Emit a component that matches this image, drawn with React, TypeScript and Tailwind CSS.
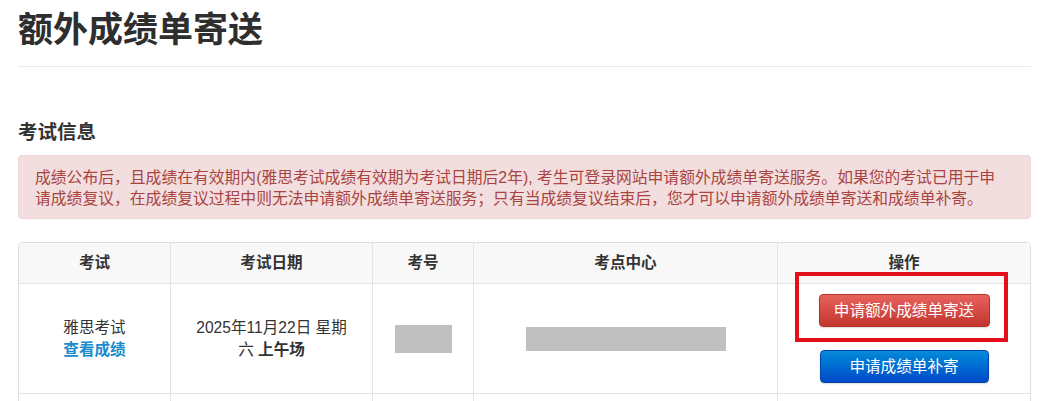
import React from "react";

const cjk = { fontFamily: '"Liberation Sans", "Noto Sans CJK SC", sans-serif' };

export default function App() {
  return (
    <div className="w-[1047px] min-h-[401px] bg-white text-[#333]" style={cjk}>
      <div className="ml-[18px] w-[1013px]">
        <div className="pt-[10px] pb-[16px] border-b border-[#eaeaea]">
          <h1 className="text-[35px] leading-[40px] font-bold text-[#2e2e2e]">额外成绩单寄送</h1>
        </div>

        <h2 className="mt-[53px] text-[19.5px] leading-[24px] font-bold text-[#333]">考试信息</h2>

        <div className="mt-[11px] rounded-[4px] bg-[#f2dede] border border-[#efd6d8] pl-[16px] pr-[30px] pt-[11px] pb-[9px] text-[15.8px] leading-[21px] text-[#a94442]">
          成绩公布后，且成绩在有效期内(雅思考试成绩有效期为考试日期后2年), 考生可登录网站申请额外成绩单寄送服务。如果您的考试已用于申请成绩复议，在成绩复议过程中则无法申请额外成绩单寄送服务；只有当成绩复议结束后，您才可以申请额外成绩单寄送和成绩单补寄。
        </div>

        <div className="relative mt-[23px]">
          <div className="border border-[#dddddd] rounded-[4px] overflow-hidden text-[15.6px] leading-[22px]">
            <div className="grid grid-cols-[151px_202px_101px_304px_253px] bg-[#f8f8f8] font-bold text-[#333]">
              <div className="h-[41px] border-b border-[#e4e4e4] flex items-center justify-center">考试</div>
              <div className="h-[41px] border-b border-l border-[#e4e4e4] flex items-center justify-center">考试日期</div>
              <div className="h-[41px] border-b border-l border-[#e4e4e4] flex items-center justify-center">考号</div>
              <div className="h-[41px] border-b border-l border-[#e4e4e4] flex items-center justify-center">考点中心</div>
              <div className="h-[41px] border-b border-l border-[#e4e4e4] flex items-center justify-center">操作</div>
            </div>
            <div className="grid grid-cols-[151px_202px_101px_304px_253px] bg-white">
              <div className="h-[110px] border-b border-[#e4e4e4] flex flex-col items-center justify-center">
                <span>雅思考试</span>
                <span className="font-bold text-[#1a8ccd]">查看成绩</span>
              </div>
              <div className="h-[110px] border-b border-l border-[#e4e4e4] flex flex-col items-center justify-center">
                <div>2025年11月22日 星期</div>
                <div>
                  六 <span className="font-bold">上午场</span>
                </div>
              </div>
              <div className="h-[110px] border-b border-l border-[#e4e4e4] flex items-center justify-center">
                <div className="w-[57px] h-[28px] bg-[#c0c0c0]"></div>
              </div>
              <div className="h-[110px] border-b border-l border-[#e4e4e4] flex items-center justify-center">
                <div className="w-[200px] h-[24px] bg-[#c0c0c0]"></div>
              </div>
              <div className="h-[110px] border-b border-l border-[#e4e4e4] flex flex-col items-center justify-center gap-[23px]">
                <button className="w-[171px] h-[33px] rounded-[4px] border border-[#b8302b] bg-gradient-to-b from-[#e8625d] to-[#c2342e] text-white text-[15.6px] shadow-[0_1px_2px_rgba(0,0,0,0.15)]">
                  申请额外成绩单寄送
                </button>
                <button className="w-[169px] h-[33px] rounded-[4px] border border-[#0045b0] bg-gradient-to-b from-[#0a8ad8] to-[#0049c9] text-white text-[15.6px] shadow-[0_1px_2px_rgba(0,0,0,0.15)]">
                  申请成绩单补寄
                </button>
              </div>
            </div>
            <div className="grid grid-cols-[151px_202px_101px_304px_253px] bg-white">
              <div className="h-[60px]"></div>
              <div className="h-[60px] border-l border-[#e4e4e4]"></div>
              <div className="h-[60px] border-l border-[#e4e4e4]"></div>
              <div className="h-[60px] border-l border-[#e4e4e4]"></div>
              <div className="h-[60px] border-l border-[#e4e4e4]"></div>
            </div>
          </div>
          <div className="absolute left-[777px] top-[30px] w-[213px] h-[70px] border-[4px] border-[#e3101b] pointer-events-none"></div>
        </div>
      </div>
    </div>
  );
}
